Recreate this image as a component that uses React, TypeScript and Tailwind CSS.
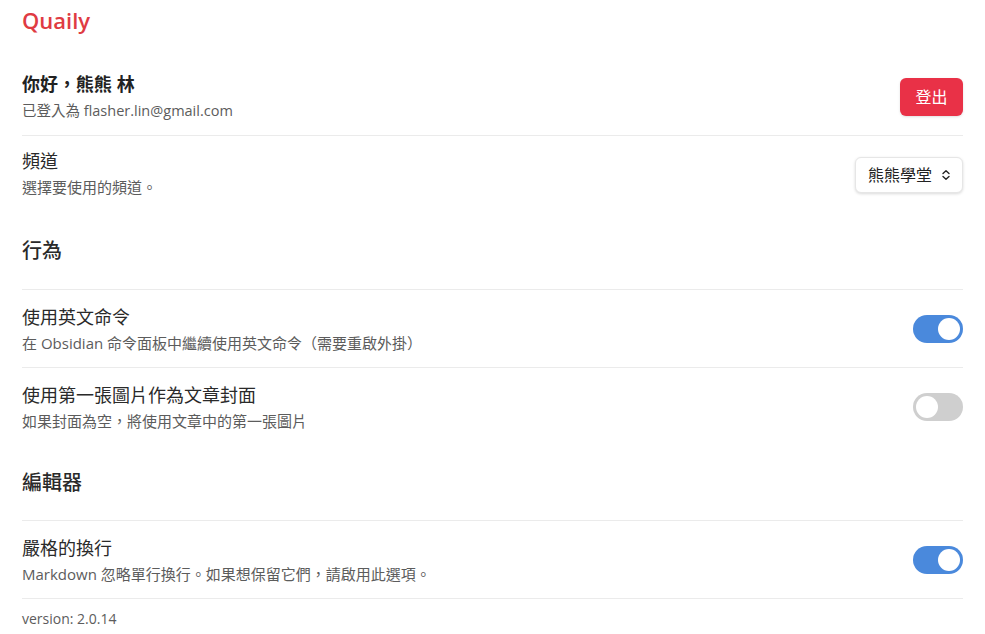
import React from "react";

const FONT = {
  fontFamily:
    '"Segoe UI", "Open Sans", "Noto Sans CJK TC", "Noto Sans", sans-serif',
};

function Toggle({ on }: { on: boolean }) {
  return (
    <div
      className={
        "relative h-[28px] w-[50px] shrink-0 rounded-full " +
        (on ? "bg-[#4a89dc]" : "bg-[#cfcfcf]")
      }
    >
      <div
        className={
          "absolute top-[3px] h-[22px] w-[22px] rounded-full bg-white " +
          (on ? "left-[25px]" : "left-[3px]")
        }
      />
    </div>
  );
}

function Row({
  name,
  desc,
  control,
}: {
  name: string;
  desc: string;
  control: React.ReactNode;
}) {
  return (
    <div className="flex items-center justify-between border-t border-[#ebebeb] pt-[15px] pb-[14px]">
      <div className="flex flex-col gap-[4px]">
        <div className="text-[18px] leading-[24px] text-[#2a2a2a]">{name}</div>
        <div className="text-[15px] leading-[20px] text-[#5c5c5c]">{desc}</div>
      </div>
      {control}
    </div>
  );
}

export default function App() {
  return (
    <div lang="zh-TW" className="min-h-screen bg-white px-[22px]" style={FONT}>
      <h1 className="pt-[5px] text-[22px] font-semibold leading-[30px] text-[#df3b43]">
        Quaily
      </h1>

      <div className="mt-[37px] flex items-center justify-between pb-[14px]">
        <div className="flex flex-col gap-[5px]">
          <div className="text-[18px] font-bold leading-[24px] text-[#222222]">
            你好，熊熊 林
          </div>
          <div className="text-[14.5px] leading-[20px] text-[#5c5c5c]">
            已登入為 flasher.lin@gmail.com
          </div>
        </div>
        <button className="h-[38px] w-[63px] rounded-[6px] bg-[#e93147] text-[16px] text-white shadow-sm">
          登出
        </button>
      </div>

      <div className="flex items-center justify-between border-t border-[#ebebeb] pt-[13px] pb-[14px]">
        <div className="flex flex-col gap-[4px]">
          <div className="text-[18px] leading-[24px] text-[#2a2a2a]">頻道</div>
          <div className="text-[15px] leading-[20px] text-[#5c5c5c]">
            選擇要使用的頻道。
          </div>
        </div>
        <div className="mt-[4px] flex h-[36px] w-[108px] items-center justify-between rounded-[6px] border border-[#e6e6e6] bg-white pl-[12px] pr-[11px] text-[16px] text-[#222222] shadow-[0_1px_3px_rgba(0,0,0,0.15)]">
          <span>熊熊學堂</span>
          <svg width="10" height="12" viewBox="0 0 10 12" fill="none" stroke="#222" strokeWidth="1.4" strokeLinecap="round" strokeLinejoin="round">
            <path d="M2 4.5 L5 1.8 L8 4.5" />
            <path d="M2 7.5 L5 10.2 L8 7.5" />
          </svg>
        </div>
      </div>

      <div className="pt-[26px] pb-[24px] text-[20px] font-medium leading-[28px] text-[#2a2a2a]">
        行為
      </div>

      <Row
        name="使用英文命令"
        desc="在 Obsidian 命令面板中繼續使用英文命令（需要重啟外掛）"
        control={<Toggle on />}
      />
      <Row
        name="使用第一張圖片作為文章封面"
        desc="如果封面為空，將使用文章中的第一張圖片"
        control={<Toggle on={false} />}
      />

      <div className="pt-[24px] pb-[23px] text-[20px] font-medium leading-[28px] text-[#2a2a2a]">
        編輯器
      </div>

      <Row
        name="嚴格的換行"
        desc="Markdown 忽略單行換行。如果想保留它們，請啟用此選項。"
        control={<Toggle on />}
      />

      <div className="border-t border-[#ebebeb] pt-[10px] text-[14px] leading-[20px] text-[#5c5c5c]">
        version: 2.0.14
      </div>
    </div>
  );
}
